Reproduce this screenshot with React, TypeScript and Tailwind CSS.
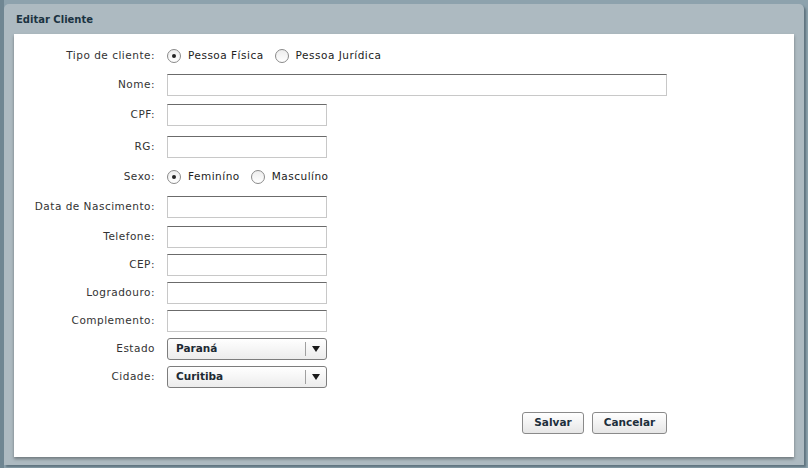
import React from 'react';

const font = "font-['DejaVu_Sans',Verdana,sans-serif]";

function Label({ children }: { children: React.ReactNode }) {
  return (
    <div className="w-[141px] shrink-0 text-right text-[10.5px] tracking-[0.5px] text-[#333]">{children}</div>
  );
}

function TextInput({ wide }: { wide?: boolean }) {
  return (
    <div
      className={`h-[22px] ${wide ? 'w-[500px]' : 'w-[160px]'} border border-[#c8c8c8] border-t-[#6b6b6b] bg-white`}
    />
  );
}

function Radio({ checked, label }: { checked?: boolean; label: string }) {
  return (
    <div className="flex items-center gap-[7px]">
      <span className="w-[14px] h-[14px] rounded-full border border-[#8a8a8a] bg-gradient-to-b from-[#ededed] to-white flex items-center justify-center">
        {checked && <span className="w-[4px] h-[4px] rounded-full bg-[#222]" />}
      </span>
      <span className="text-[10.5px] tracking-[0.5px] text-[#222]">{label}</span>
    </div>
  );
}

function Select({ value }: { value: string }) {
  return (
    <div className="h-[22px] w-[160px] rounded-[3px] border border-[#7d7d7d] bg-gradient-to-b from-white to-[#ececec] flex items-center">
      <span className="flex-1 pl-[8px] font-bold text-[10.5px] text-[#1d2a33]">{value}</span>
      <span className="h-[14px] w-px bg-[#a0a0a0]" />
      <span className="w-[20px] flex justify-center">
        <svg width="8" height="6" viewBox="0 0 8 6">
          <path d="M0 0H8L4 6Z" fill="#1a1a1a" />
        </svg>
      </span>
    </div>
  );
}

function Button({ children, w }: { children: React.ReactNode; w: string }) {
  return (
    <button
      className={`${w} h-[22px] rounded-[3px] border border-[#8a8a8a] bg-gradient-to-b from-white to-[#e6e6e6] font-bold text-[10.5px] text-[#1d2f3b]`}
    >
      {children}
    </button>
  );
}

function Row({ label, children, mt }: { label: string; children: React.ReactNode; mt: string }) {
  return (
    <div className={`flex items-center gap-[12px] ${mt}`}>
      <Label>{label}</Label>
      {children}
    </div>
  );
}

export default function App() {
  return (
    <div className={`w-[808px] h-[468px] bg-[#8da2ad] border-l-[4px] border-l-[#6f8692] pt-[4px] ${font}`}>
      <div className="w-[800px] h-[461px] rounded-t-[5px] bg-[#adbac1] shadow-[2px_2px_2px_rgba(40,60,70,0.45)] flex flex-col">
        <div className="h-[30px] pl-[12px] flex items-center font-bold text-[10px] text-[#1b3341]">
          Editar Cliente
        </div>
        <div className="ml-[10px] w-[780px] h-[423px] bg-white shadow-[0_2px_3px_rgba(0,0,0,0.35)] pt-[12px]">
          <Row label="Tipo de cliente:" mt="">
            <div className="h-[20px] flex items-center gap-[11px]">
              <Radio checked label="Pessoa Física" />
              <Radio label="Pessoa Jurídica" />
            </div>
          </Row>
          <Row label="Nome:" mt="mt-[8px]">
            <TextInput wide />
          </Row>
          <Row label="CPF:" mt="mt-[8px]">
            <TextInput />
          </Row>
          <Row label="RG:" mt="mt-[10px]">
            <TextInput />
          </Row>
          <Row label="Sexo:" mt="mt-[9px]">
            <div className="h-[20px] flex items-center gap-[11px]">
              <Radio checked label="Feminíno" />
              <Radio label="Masculíno" />
            </div>
          </Row>
          <Row label="Data de Nascimento:" mt="mt-[9px]">
            <TextInput />
          </Row>
          <Row label="Telefone:" mt="mt-[8px]">
            <TextInput />
          </Row>
          <Row label="CEP:" mt="mt-[6px]">
            <TextInput />
          </Row>
          <Row label="Logradouro:" mt="mt-[6px]">
            <TextInput />
          </Row>
          <Row label="Complemento:" mt="mt-[6px]">
            <TextInput />
          </Row>
          <Row label="Estado" mt="mt-[6px]">
            <Select value="Paraná" />
          </Row>
          <Row label="Cidade:" mt="mt-[6px]">
            <Select value="Curitiba" />
          </Row>
          <div className="mt-[24px] w-[653px] flex justify-end gap-[8px]">
            <Button w="w-[62px]">Salvar</Button>
            <Button w="w-[75px]">Cancelar</Button>
          </div>
        </div>
      </div>
    </div>
  );
}
